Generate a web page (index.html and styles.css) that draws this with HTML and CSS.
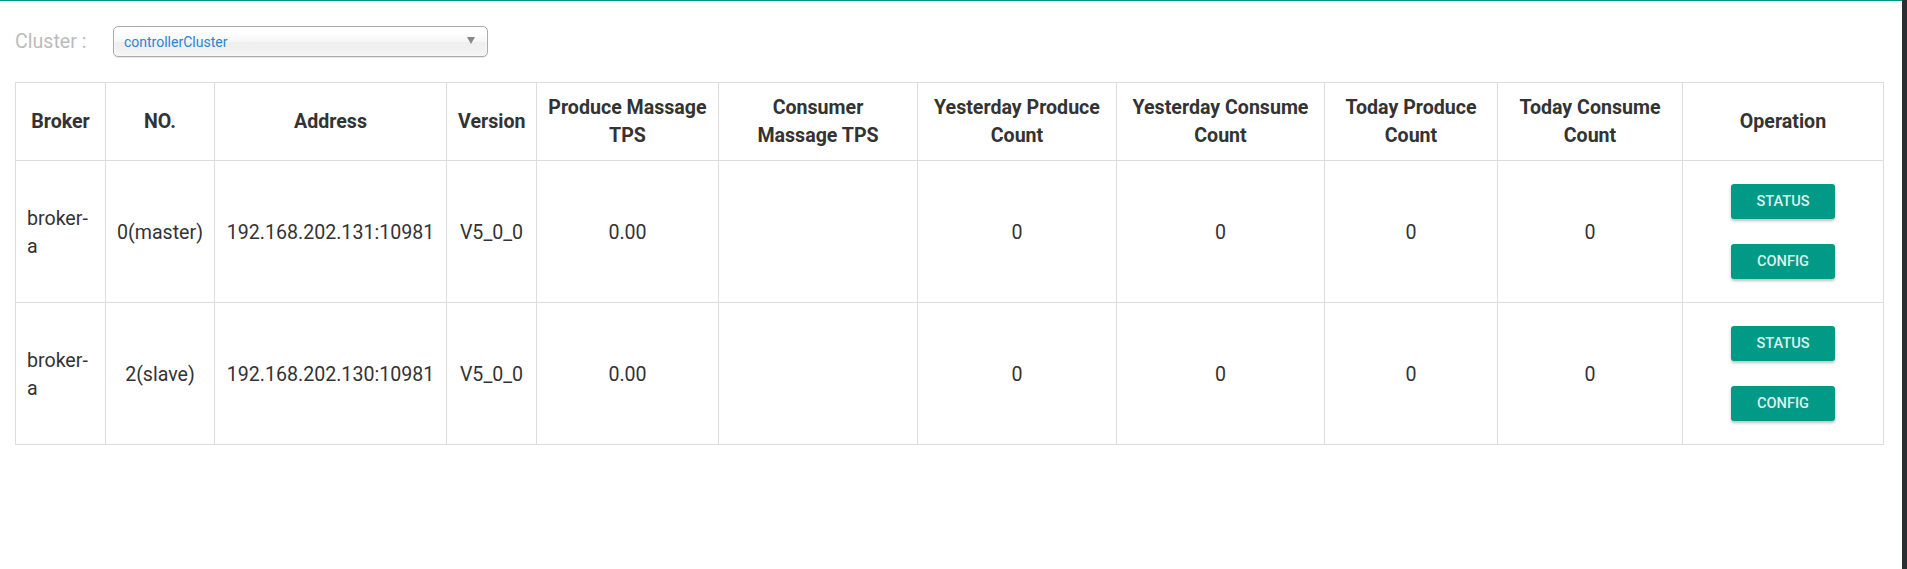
FILE: index.html
```html
<!DOCTYPE html>
<html>
<head>
<meta charset="utf-8">
<link rel="stylesheet" href="styles.css">
</head>
<body>
<div class="app">
  <div class="main">
    <div class="cluster-row">
      <span class="cluster-label">Cluster :</span>
      <div class="select">
        <span class="select-value">controllerCluster</span>
        <span class="select-arrow"></span>
      </div>
    </div>
    <table class="grid">
      <colgroup>
        <col class="c1"><col class="c2"><col class="c3"><col class="c4"><col class="c5"><col class="c6"><col class="c7"><col class="c8"><col class="c9"><col class="c10"><col class="c11">
      </colgroup>
      <thead>
        <tr>
          <th>Broker</th>
          <th>NO.</th>
          <th>Address</th>
          <th>Version</th>
          <th>Produce Massage TPS</th>
          <th>Consumer<br>Massage TPS</th>
          <th>Yesterday Produce Count</th>
          <th>Yesterday Consume Count</th>
          <th>Today Produce Count</th>
          <th>Today Consume Count</th>
          <th>Operation</th>
        </tr>
      </thead>
      <tbody>
        <tr>
          <td class="left">broker-a</td>
          <td>0(master)</td>
          <td>192.168.202.131:10981</td>
          <td>V5_0_0</td>
          <td>0.00</td>
          <td></td>
          <td>0</td>
          <td>0</td>
          <td>0</td>
          <td>0</td>
          <td class="ops"><div class="ops-list"><button class="btn">STATUS</button><button class="btn">CONFIG</button></div></td>
        </tr>
        <tr>
          <td class="left">broker-a</td>
          <td>2(slave)</td>
          <td>192.168.202.130:10981</td>
          <td>V5_0_0</td>
          <td>0.00</td>
          <td></td>
          <td>0</td>
          <td>0</td>
          <td>0</td>
          <td>0</td>
          <td class="ops"><div class="ops-list"><button class="btn">STATUS</button><button class="btn">CONFIG</button></div></td>
        </tr>
      </tbody>
    </table>
  </div>
  <div class="rail"></div>
</div>
</body>
</html>
```
FILE: styles.css
```css
html, body {
  margin: 0;
  padding: 0;
  background: #fff;
}
body {
  font-family: Roboto, "Liberation Sans", sans-serif;
  color: #333;
}
.app {
  display: flex;
  height: 569px;
}
.main {
  flex: 1;
  border-top: 1px solid #009688;
  padding-left: 15px;
}
.rail {
  width: 5px;
  background: #2b2f33;
}
.cluster-row {
  display: flex;
  align-items: center;
  margin-top: 25px;
  height: 31px;
}
.cluster-label {
  font-size: 19.6px;
  color: #bcbcbc;
  width: 98px;
}
.select {
  box-sizing: border-box;
  width: 375px;
  height: 31px;
  border: 1px solid #aaa;
  border-radius: 5px;
  background: linear-gradient(#ffffff 20%, #f6f6f6 50%, #eeeeee 52%, #f4f4f4 100%);
  box-shadow: 0 0 3px #fff inset, 0 1px 1px rgba(0,0,0,0.1);
  display: flex;
  align-items: center;
  justify-content: space-between;
  padding: 0 12px 0 10px;
}
.select-value {
  font-size: 14px;
  color: #2a85d6;
}
.select-arrow {
  width: 0;
  height: 0;
  border-left: 4px solid transparent;
  border-right: 4px solid transparent;
  border-top: 7px solid #888;
  margin-bottom: 2px;
}
.grid {
  margin-top: 25px;
  border-collapse: collapse;
  table-layout: fixed;
  width: 1868px;
  font-size: 19.6px;
  line-height: 28px;
}
.c1 { width: 90px; }
.c2 { width: 109px; }
.c3 { width: 232px; }
.c4 { width: 90px; }
.c5 { width: 182px; }
.c6 { width: 199px; }
.c7 { width: 199px; }
.c8 { width: 208px; }
.c9 { width: 173px; }
.c10 { width: 185px; }
.c11 { width: 201px; }
.grid th, .grid td {
  border: 1px solid #ddd;
  text-align: center;
  vertical-align: middle;
  padding: 11px 11px;
}
.grid th {
  font-weight: 700;
  padding: 11px 11px 10px;
}
.grid td {
  font-weight: 400;
  padding-top: 13px;
  padding-bottom: 11px;
}
.grid td.left {
  text-align: left;
}
.grid td.ops {
  padding: 23px 11px 23px;
}
.ops-list {
  display: flex;
  flex-direction: column;
  align-items: center;
  gap: 25px;
}
.btn {
  font-family: Roboto, "Liberation Sans", sans-serif;
  font-size: 14.6px;
  font-weight: 500;
  line-height: 35px;
  height: 35px;
  width: 104px;
  padding: 0;
  border: none;
  border-radius: 3px;
  background: #009a87;
  color: #dcf1ee;
  box-shadow: 0 2px 3px rgba(0,0,0,0.25);
}
```
